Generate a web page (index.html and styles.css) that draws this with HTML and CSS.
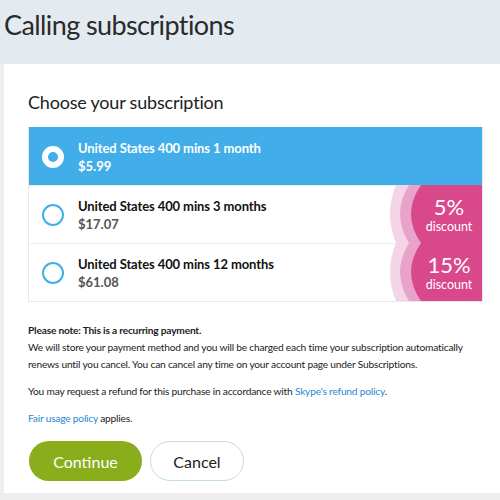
FILE: index.html
```html
<!DOCTYPE html>
<html>
<head>
<meta charset="utf-8">
<link rel="stylesheet" href="styles.css">
</head>
<body>
<header class="top">
  <h1 class="title">Calling subscriptions</h1>
</header>
<main class="panel">
  <h2 class="subtitle">Choose your subscription</h2>
  <ul class="plans">
    <li class="plan selected">
      <span class="radio"></span>
      <div class="info">
        <div class="name">United States 400 mins 1 month</div>
        <div class="price">$5.99</div>
      </div>
    </li>
    <li class="plan">
      <span class="radio"></span>
      <div class="info">
        <div class="name">United States 400 mins 3 months</div>
        <div class="price">$17.07</div>
      </div>
      <div class="badge">
        <svg class="badge-bg" viewBox="0 0 100 58" preserveAspectRatio="none">
          <path d="M14 0 Q2 29 14 58 L100 58 L100 0 Z" fill="#f4d4e7"/>
          <path d="M27 0 Q9 29 27 58 L100 58 L100 0 Z" fill="#e9a3cb"/>
          <path d="M39 0 Q19 29 39 58 L100 58 L100 0 Z" fill="#d9488b"/>
        </svg>
        <div class="badge-text"><span class="pct">5%</span><span class="disc">discount</span></div>
      </div>
    </li>
    <li class="plan">
      <span class="radio"></span>
      <div class="info">
        <div class="name">United States 400 mins 12 months</div>
        <div class="price">$61.08</div>
      </div>
      <div class="badge">
        <svg class="badge-bg" viewBox="0 0 100 58" preserveAspectRatio="none">
          <path d="M14 0 Q2 29 14 58 L100 58 L100 0 Z" fill="#f4d4e7"/>
          <path d="M27 0 Q9 29 27 58 L100 58 L100 0 Z" fill="#e9a3cb"/>
          <path d="M39 0 Q19 29 39 58 L100 58 L100 0 Z" fill="#d9488b"/>
        </svg>
        <div class="badge-text"><span class="pct">15%</span><span class="disc">discount</span></div>
      </div>
    </li>
  </ul>
  <div class="notes">
    <p><strong>Please note: This is a recurring payment.</strong><br>We will store your payment method and you will be charged each time your subscription automatically renews until you cancel. You can cancel any time on your account page under Subscriptions.</p>
    <p>You may request a refund for this purchase in accordance with <a href="#">Skype's refund policy</a>.</p>
    <p><a href="#">Fair usage policy</a> applies.</p>
  </div>
  <div class="actions">
    <button class="btn btn-primary">Continue</button>
    <button class="btn btn-secondary">Cancel</button>
  </div>
</main>
</body>
</html>
```

FILE: styles.css
```css
* { box-sizing: border-box; }
html, body { margin: 0; padding: 0; }
body {
  width: 500px;
  height: 500px;
  overflow: hidden;
  background: #eeeeee;
  font-family: "Lato", "Open Sans", sans-serif;
  color: #222;
}
.top {
  background: #e3ebf1;
  height: 64px;
  padding: 5px 0 0 4px;
}
.title {
  margin: 0;
  font-weight: 400;
  font-size: 27px;
  line-height: 40px;
  letter-spacing: -0.6px;
  color: #2a2a2a;
}
.panel {
  background: #fff;
  margin-left: 4px;
  height: 429px;
  padding: 25px 17px 0 24px;
}
.subtitle {
  margin: 0 0 12px 0;
  font-weight: 400;
  font-size: 18px;
  line-height: 26px;
  letter-spacing: -0.2px;
  color: #222;
}
.plans {
  list-style: none;
  margin: 0;
  padding: 0;
  border: 1px solid #e8e8e8;
  border-top: none;
}
.plan {
  position: relative;
  display: flex;
  align-items: center;
  height: 58px;
  padding-left: 13px;
  border-top: 1px solid #ececec;
  background: #fff;
}
.plan.selected {
  background: #41aeea;
  border-top-color: #41aeea;
  color: #fff;
}
.radio {
  width: 22px;
  height: 22px;
  border-radius: 50%;
  border: 2px solid #41aeea;
  flex: none;
}
.plan.selected .radio {
  border: 6px solid #fff;
}
.info {
  margin-left: 14px;
  font-weight: 700;
}
.name {
  font-size: 13px;
  line-height: 18px;
  letter-spacing: -0.1px;
  color: #111;
}
.price {
  font-size: 13px;
  line-height: 18px;
  color: #555;
}
.plan.selected .name, .plan.selected .price { color: #fff; }
.badge {
  position: absolute;
  right: 0;
  top: -1px;
  bottom: 0;
  width: 100px;
}
.badge-bg {
  position: absolute;
  left: 0;
  top: 0;
  width: 100%;
  height: 100%;
}
.badge-text {
  position: absolute;
  left: 34px;
  right: 0;
  top: 0;
  bottom: 0;
  display: flex;
  flex-direction: column;
  align-items: center;
  justify-content: center;
  color: #fff;
}
.pct {
  font-size: 22px;
  line-height: 24px;
}
.disc {
  font-size: 12.5px;
  line-height: 15px;
}
.notes {
  margin-top: 20px;
  font-size: 10.2px;
  line-height: 17px;
  letter-spacing: -0.2px;
  color: #222;
}
.notes p { margin: 0 0 10px 0; }
.notes strong { font-weight: 700; }
.notes a { color: #2a87d0; text-decoration: none; }
.actions {
  display: flex;
  gap: 8px;
  margin-top: 14px;
  padding-left: 1px;
}
.btn {
  height: 40px;
  border-radius: 20px;
  font-family: inherit;
  font-size: 16px;
  padding: 0;
}
.btn-primary {
  width: 113px;
  background: #8aad1b;
  border: none;
  color: #fff;
}
.btn-secondary {
  width: 94px;
  background: #fff;
  border: 1.5px solid #c3dce8;
  color: #222;
}
```
